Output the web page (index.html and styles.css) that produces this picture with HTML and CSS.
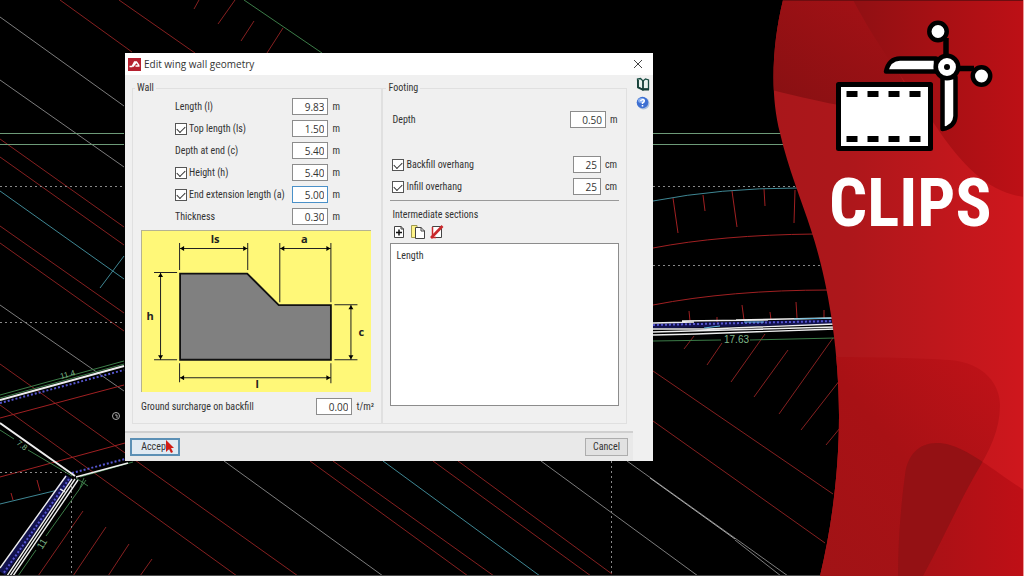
FILE: index.html
```html
<!DOCTYPE html>
<html lang="en">
<head>
<meta charset="utf-8">
<title>Edit wing wall geometry</title>
<link rel="stylesheet" href="styles.css">
</head>
<body>
<main class="scene">
  <svg class="drawing" viewBox="0 0 1024 576" preserveAspectRatio="xMinYMin slice" aria-hidden="true">
    <g class="gray">
      <path d="M0 17L124 106M0 80L124 167M0 305L124 391M224 461L383 576M541 461L698 576M627 461L788 576M735 540L781 576"/>
      <path d="M650 478L735 539" stroke="#aaa"/>
    </g>
    <g class="red">
      <path d="M60 0L132 52M119 0L195 53M0 139L124 227M0 157L124 245M0 226L124 313M0 243L124 331M0 364L298 576M0 405L237 576M310 461L468 576M333 461L494 576M433 461L591 576M458 461L612 574M653 371L833 494M653 421L825 543"/>
      <path d="M199 0L194 9M235 0L218 24M254 21L241 41M283 28L267 53M83 511L38 576M106 527L73 576M129 544L108 576M152 559L140 576M694 336L684 349M722 343L707 365M765 334L731 382M788 350L754 397M833 338L779 414M840 380L801 430M840 428L826 445"/>
    </g>
    <g class="bright-red">
      <path d="M0 418L124 385M0 477L125 443M11 493L13 500M37 480L40 491"/>
      <path d="M673 198L678 233M703 195L705 211M732 191L737 227M764 189L765 206M795 190L794 223M689 311L690 321M717 317V322M742 305L744 320M770 312L771 320M796 302L797 318M824 310V318M653 248Q720 235 815 234M653 305Q730 290 830 290"/>
    </g>
    <g class="green">
      <path d="M0 133.500H124M0 144.500H124M653 133.500H784M653 144.500H788" stroke="#6d9a78"/>
      <path d="M244 0L322 53M0 395L124 361M0 398L124 364M80 477L133 462M0 430L14 439M28 450L72 476M86 480L46 536M36 550L18 576M76 478L88 486M80 488L84 478M653 341L721 340M750 340L835 338"/>
    </g>
    <g class="cyan"><path d="M0 191L124 279M383 461L540 576M100 288L124 256M0 504L58 490M653 201Q720 188 798 188"/></g>
    <g class="dotted">
      <path d="M0 186.500H124M0 322.500H124M0 472.500H66M653 186.500H798M653 265.500H822M71.500 486V576M611.500 461V576"/>
    </g>
    <g class="navy"><path d="M653 326L835 322" stroke-width="5"/><path d="M69 477L2 573" stroke-width="8"/></g>
    <g class="blue"><path d="M0 403L124 370M72 473L125 459M69 479L3 574M653 325L835 321"/></g>
    <g class="white">
      <path d="M0 400L124 366M0 423L75 476" stroke-width="2"/>
      <path d="M76 477L128 463M66 476L0 568M72 479L7 576M75 479L10 576M78 480L13 576M60 489L65 492"/>
      <path d="M653 323L694 322M682 321L768 320M736 320L835 318M653 329L708 329L835 324M653 332L835 327M653 335L696 334L835 329"/>
    </g>
    <path d="M704 328L720 326M744 322L764 322M794 319L835 318" stroke="#63b7d8"/>
    <g class="dimension">
      <text x="724" y="343">17.63</text>
      <text class="dimension-small" transform="translate(61 379) rotate(-15)">11.4</text>
      <text class="dimension-small" transform="translate(16 444) rotate(38)">7.8</text>
      <text transform="translate(42 550) rotate(-57)">11</text>
    </g>
    <circle cx="116" cy="416" r="3.500" fill="none" stroke="#aaa"/>
    <path d="M115 415H117V418" fill="none" stroke="#aaa"/>
    <path d="M0 575.500H1024" stroke="#4c4c4c"/>
  </svg>

  <section class="dialog" role="dialog" aria-labelledby="dialog-title">
    <header class="titlebar">
      <svg class="app-icon" viewBox="0 0 13 13" aria-hidden="true"><path fill="#b5202f" d="M0 0H13V13H0Z"/><path d="M1.500 8.500H4L6.500 4H8.500L11 7.500M5 8.500L8 4.500M7.500 8H11.500" fill="none" stroke="#fff" stroke-width="1.300"/></svg>
      <h1 class="title" id="dialog-title">Edit wing wall geometry</h1>
      <button class="close" type="button" aria-label="Close"><svg viewBox="0 0 10 10"><path d="M1 1L9 9M9 1L1 9" stroke="#444"/></svg></button>
    </header>
    <form class="form" id="wing-wall">
      <div class="panels">
        <fieldset class="group wall">
          <legend>Wall</legend>
          <div class="rows">
            <div class="row"><label for="length">Length (l)</label><input class="value" id="length" value="9.83"><span class="unit">m</span></div>
            <div class="row"><label><input type="checkbox" class="tick" checked>Top length (ls)</label><input class="value" aria-label="Top length" value="1.50"><span class="unit">m</span></div>
            <div class="row"><label for="depth-end">Depth at end (c)</label><input class="value" id="depth-end" value="5.40"><span class="unit">m</span></div>
            <div class="row"><label><input type="checkbox" class="tick" checked>Height (h)</label><input class="value" aria-label="Height" value="5.40"><span class="unit">m</span></div>
            <div class="row"><label><input type="checkbox" class="tick" checked>End extension length (a)</label><input class="value active" aria-label="End extension length" value="5.00"><span class="unit">m</span></div>
            <div class="row"><label for="thickness">Thickness</label><input class="value" id="thickness" value="0.30"><span class="unit">m</span></div>
          </div>
          <svg class="diagram" viewBox="0 0 230 162" role="img" aria-label="Wing wall dimensions">
            <path fill="#fff878" d="M0 0H230V162H0Z"/>
            <path d="M.5 162V.5H230" fill="none" stroke="#b5b391"/>
            <path d="M39 43.500H106L137.500 75H189.500V129.500H39Z" fill="#808080" stroke="#111" stroke-width="1.800"/>
            <path d="M38.500 13V40M106.500 13V40M138.500 13V72M189.500 13V72M38.500 18.500H106.500M138.500 18.500H189.500M13 42.500H36M13 129.500H36M19.500 43V129M193 74.500H216M193 129.500H216M209.500 75V129M38.500 133V152M189.500 133V153M38.500 147.500H189.500" fill="none" stroke="#222"/>
            <path d="M39 18.500l4-2.500v5zM106 18.500l-4-2.500v5zM139 18.500l4-2.500v5zM189 18.500l-4-2.500v5zM39 147.500l4-2.500v5zM189 147.500l-4-2.500v5zM19.500 43l-2.500 4h5zM19.500 129l-2.500-4h5zM209.500 75l-2.500 4h5zM209.500 129l-2.500-4h5z"/>
            <g class="diagram-label"><text x="74" y="13">ls</text><text x="163" y="13">a</text><text x="9" y="90">h</text><text x="220" y="106">c</text><text x="116" y="158">l</text></g>
          </svg>
          <div class="row surcharge"><label for="surcharge">Ground surcharge on backfill</label><input class="value" id="surcharge" value="0.00"><span class="unit">t/m²</span></div>
        </fieldset>

        <fieldset class="group footing">
          <legend>Footing</legend>
          <div class="row depth"><label for="depth">Depth</label><input class="value" id="depth" value="0.50"><span class="unit">m</span></div>
          <div class="rows">
            <div class="row"><label><input type="checkbox" class="tick" checked>Backfill overhang</label><input class="value short" aria-label="Backfill overhang" value="25"><span class="unit">cm</span></div>
            <div class="row"><label><input type="checkbox" class="tick" checked>Infill overhang</label><input class="value short" aria-label="Infill overhang" value="25"><span class="unit">cm</span></div>
          </div>
          <hr class="rule">
          <h2 class="subtitle">Intermediate sections</h2>
          <div class="tools">
            <button type="button" aria-label="Add"><svg viewBox="0 0 14 14"><path d="M2.500 1.500H9L11.500 4V12.500H2.500Z" fill="#fff" stroke="#444"/><path d="M9 1V4H12" fill="none" stroke="#444"/><path d="M7 4.500V10.500M4 7.500H10" stroke="#111" stroke-width="1.500"/></svg></button>
            <button type="button" aria-label="Copy"><svg viewBox="0 0 14 14"><path d="M.5.500H6V12.500H.5Z" fill="#fff48a" stroke="#a09a50"/><path d="M4.500 2.500H10L13.500 6V13.500H4.500Z" fill="#fff" stroke="#444"/><path d="M10 2V6H14" fill="none" stroke="#444"/></svg></button>
            <button type="button" aria-label="Delete"><svg viewBox="0 0 14 14"><path d="M2.500 1.500H11.500V12.500H2.500Z" fill="#fff" stroke="#444"/><path d="M2.500 2V12.500H6" fill="none" stroke="#c9282b" stroke-width="1.500"/><path d="M1 13L12.500 1" stroke="#c9282b" stroke-width="2.600"/></svg></button>
          </div>
          <div class="list">Length</div>
        </fieldset>
      </div>
      <footer class="actions">
        <button class="action primary" type="button">Accept</button>
        <button class="action" type="button">Cancel</button>
        <svg class="pointer" viewBox="0 0 8 14" aria-hidden="true"><path d="M0 0L8 8H5L7 12L5 13L3 9L0 12Z" fill="#d21c14"/></svg>
      </footer>
    </form>
    <nav class="side">
      <button type="button" aria-label="Manual"><svg viewBox="0 0 14 14"><path d="M1.500 2L2 10L6 12L7 13L8 12H12.500V3L9.500 2L7 4L4.500 1.500Z" fill="#e9f3ee" stroke="#174a40" stroke-width="1.300"/><path d="M7 4V12M2 3V10.500L6.500 12.500H13" fill="none" stroke="#173f38" stroke-width="1.800"/></svg></button>
      <button type="button" aria-label="Help"><svg viewBox="0 0 14 14"><circle cx="7.500" cy="7.500" r="6" fill="#a9bfdd"/><circle cx="6.500" cy="6.500" r="5.800" fill="#3d6fd2"/><ellipse cx="5.500" cy="4.500" rx="3.500" ry="2.500" fill="#88aff0"/><path d="M4.500 5Q6.500 2.500 8.300 4.500Q8.500 6 6.500 7V8M6.500 9V10.500" fill="none" stroke="#fff" stroke-width="1.500"/></svg></button>
    </nav>
  </section>

  <aside class="banner">
    <svg class="banner-shape" viewBox="772 0 252 576" preserveAspectRatio="none" aria-hidden="true">
      <defs>
        <linearGradient id="base" x1="0" x2="1"><stop offset="0" stop-color="#a9171b"/><stop offset=".3" stop-color="#ad171b"/><stop offset="1" stop-color="#cf171d"/></linearGradient>
        <linearGradient id="top-dark" x1="0" y1="1" x2="1" y2="0"><stop offset="0" stop-color="#861012"/><stop offset="1" stop-color="#a81116"/></linearGradient>
        <linearGradient id="top-right" x1="0" x2="1"><stop offset="0" stop-color="#901013"/><stop offset=".5" stop-color="#a71014"/><stop offset="1" stop-color="#bd1016"/></linearGradient>
        <linearGradient id="low" x1="0" y1="1" x2="1" y2="0"><stop offset="0" stop-color="#a11316"/><stop offset=".5" stop-color="#a81115"/><stop offset="1" stop-color="#c01218"/></linearGradient>
        <linearGradient id="right" x1="0" x2="1"><stop offset="0" stop-color="#a31216"/><stop offset="1" stop-color="#bf0f16"/></linearGradient>
        <clipPath id="edge"><path id="outline" d="M783 0C772 45 770 95 780 133C788 168 801 199 811 230C825 272 839 340 839 415C839 475 831 530 820 576H1024V0Z"/></clipPath>
        <clipPath id="lobe"><path d="M820 357C880 357 920 358 950 360C985 363 1000 385 1000 405C1000 430 990 450 975 475C958 505 940 545 923 576H820Z"/></clipPath>
      </defs>
      <g clip-path="url(#edge)">
        <path fill="url(#base)" d="M772 0H1024V576H772Z"/>
        <path fill="url(#top-dark)" d="M772 0H860L900 75L920 112C880 114 830 105 772 90Z"/>
        <path fill="url(#top-right)" d="M853 0C868 28 880 47 900 75L935 125C965 170 990 192 1024 197V0Z"/>
        <path fill="url(#low)" d="M820 357C880 357 920 358 950 360C985 363 1000 385 1000 405C1000 430 990 450 975 475C958 505 940 545 923 576H820Z"/>
        <path fill="url(#right)" d="M1024 490C1000 475 970 450 950 445C925 438 908 450 905 475C901 505 898 540 898 576H1024Z"/>
        <path clip-path="url(#lobe)" fill="#941114" d="M1024 490C1000 475 970 450 950 445C925 438 908 450 905 475C901 505 898 540 898 576H1024Z"/>
        <path d="M783 .5H1024" stroke="#6d0d10"/><path d="M1023.500 0V576" stroke="#ef9a98"/>
      </g>
    </svg>
    <svg class="clip-icon" viewBox="836 20 158 132" aria-hidden="true">
      <path d="M838.500 84.500H930.500V148.500H838.500Z" fill="#fff" stroke="#000" stroke-width="5" stroke-linejoin="round"/>
      <path d="M846.500 91h11v6h-11zM867.500 91h11v6h-11zM888.500 91h11v6h-11zM909.500 91h11v6h-11zM846.500 136h11v6h-11zM867.500 136h11v6h-11zM888.500 136h11v6h-11zM909.500 136h11v6h-11z"/>
      <path d="M946 38V58M955 68.500H974" stroke="#000" stroke-width="5.500"/>
      <g fill="#fff" stroke="#000" stroke-width="4.500" stroke-linejoin="round">
        <path d="M886 71.500Q889 58.500 900 58.500H936V71.500Z"/>
        <path d="M942.500 77V129Q955 127 955.500 116V77Z"/>
        <circle cx="938" cy="31.500" r="8.700"/><circle cx="981.500" cy="76" r="8.700"/>
        <circle cx="947" cy="67" r="11.200"/>
      </g>
      <circle cx="947" cy="67" r="3"/>
    </svg>
    <p class="banner-title">CLIPS</p>
  </aside>
</main>
</body>
</html>
```
FILE: styles.css
```css
* { box-sizing: border-box; }

body {
  margin: 0;
  background: #000;
  color: #333;
  font-family: "Liberation Sans", Arial, sans-serif;
}

h1, h2, p { margin: 0; font-weight: 400; }

button { padding: 0; border: 0; background: none; font: inherit; color: inherit; }

svg { display: block; }

.scene { position: relative; min-height: 100vh; overflow: hidden; }

/* CAD drawing behind the dialog */
.drawing { position: absolute; inset: 0; width: 100%; height: 100%; fill: none; }
.gray { stroke: #7c7c7c; }
.red { stroke: #862020; }
.bright-red { stroke: #a02022; }
.green { stroke: #3c7c48; }
.cyan { stroke: #3f8794; }
.dotted { stroke: #888; stroke-dasharray: 2 3; }
.navy { stroke: #12124e; }
.blue { stroke: #5656d0; stroke-dasharray: 2 2; stroke-width: 2; }
.white { stroke: #eee; stroke-width: 1.4; }
.dimension { fill: #7fb888; font-size: 10px; }
.dimension-small { font-size: 8px; }

/* Dialog */
.dialog {
  position: absolute;
  top: 53px;
  left: 125px;
  width: 528px;
  display: grid;
  grid-template-columns: 1fr 20px;
  background: #f0f0f0;
  font-family: "Roboto Condensed", "Liberation Sans", Arial, sans-serif;
  font-size: 10px;
  line-height: 12px;
}

.titlebar {
  grid-column: 1 / -1;
  display: flex;
  align-items: center;
  gap: 3px;
  height: 22px;
  padding: 0 10px 0 3px;
  background: #fff;
}
.app-icon { width: 13px; height: 13px; }
.title { flex: 1; font-family: "Open Sans", sans-serif; font-size: 10px; line-height: 14px; }
.close svg { width: 10px; height: 10px; }

.panels {
  display: grid;
  grid-template-columns: 251fr 245fr;
  padding: 7px 6px 7px 7px;
}

.group {
  display: flex;
  flex-direction: column;
  min-width: 0;
  margin: 0;
  border: 1px solid #e0e0e0;
}
.wall { padding: 4px 10px 8px 8px; }
.footing { padding: 17px 7px; }
legend { padding: 0 2px; margin-left: -6px; }
.footing legend { margin-left: -4px; }

.rows { display: flex; flex-direction: column; gap: 5px; }
.wall .rows { padding: 0 26px 0 34px; }
.row { display: flex; align-items: center; }
.row label { display: flex; align-items: center; gap: 2px; flex: 1; white-space: nowrap; }
.footing .row { padding-left: 2px; }

.value {
  width: 36px;
  height: 17px;
  padding: 0 3px;
  border: 1px solid #8c8c8c;
  border-radius: 0;
  background: #fff;
  color: #333;
  font-family: "Open Sans", sans-serif;
  font-size: 10px;
  text-align: right;
}
.value.short { width: 28px; }
.value.active { border-color: #4a90c8; }
.unit { width: 13px; margin-left: 4px; white-space: nowrap; }
.surcharge .unit { width: 15px; }
.footing .unit { width: 14px; }
.depth .unit { width: 9px; }

.tick {
  appearance: none;
  width: 12px;
  height: 12px;
  margin: 0;
  border: 1px solid #555;
  background: #fff;
  display: grid;
  place-items: center;
}
.tick:checked::before {
  content: "";
  width: 7px;
  height: 4px;
  border: solid #333;
  border-width: 0 0 1px 1px;
  transform: rotate(-45deg);
}

.diagram { width: 100%; margin: 5px 0 6px; }
.diagram-label { font: bold 11px "Open Sans", sans-serif; text-anchor: middle; fill: #222; }

.depth { margin-bottom: 28px; }
.rule { width: 100%; margin: 5px 0 8px; border: 0; border-top: 1px solid #999; }
.subtitle { padding-left: 2px; font-size: 10px; line-height: 12px; }
.tools { display: flex; gap: 5px; padding: 4px 2px; }
.tools svg { width: 14px; height: 14px; }
.list { flex: 1; padding: 6px 5px; border: 1px solid #8c8c8c; background: #fff; }

.actions {
  position: relative;
  display: flex;
  justify-content: space-between;
  align-items: center;
  height: 30px;
  padding: 0 5px;
  border-top: 2px solid #d0d0d0;
  background: #e9e9e9;
}
.action { width: 43px; height: 18px; border: 1px solid #adadad; background: #e1e1e1; }
.primary { width: 50px; border: 2px solid #5c90b5; background: #e1eaf2; }
.pointer { position: absolute; top: 7px; left: 41px; width: 8px; height: 14px; }

.side { display: flex; flex-direction: column; align-items: center; gap: 5px; padding-top: 2px; }
.side svg { width: 14px; height: 14px; }

/* Banner */
.banner { position: absolute; top: 0; right: 0; bottom: 0; width: 252px; padding: 20px 30px 0 64px; }
.banner-shape { position: absolute; inset: 0; width: 100%; height: 100%; }
.clip-icon { position: relative; width: 100%; }
.banner-title {
  position: relative;
  margin: 11px 0 0 -7px;
  color: #fff;
  font-family: "Roboto Condensed", Roboto, sans-serif;
  font-size: 67px;
  font-weight: 700;
  line-height: 80px;
}
```
